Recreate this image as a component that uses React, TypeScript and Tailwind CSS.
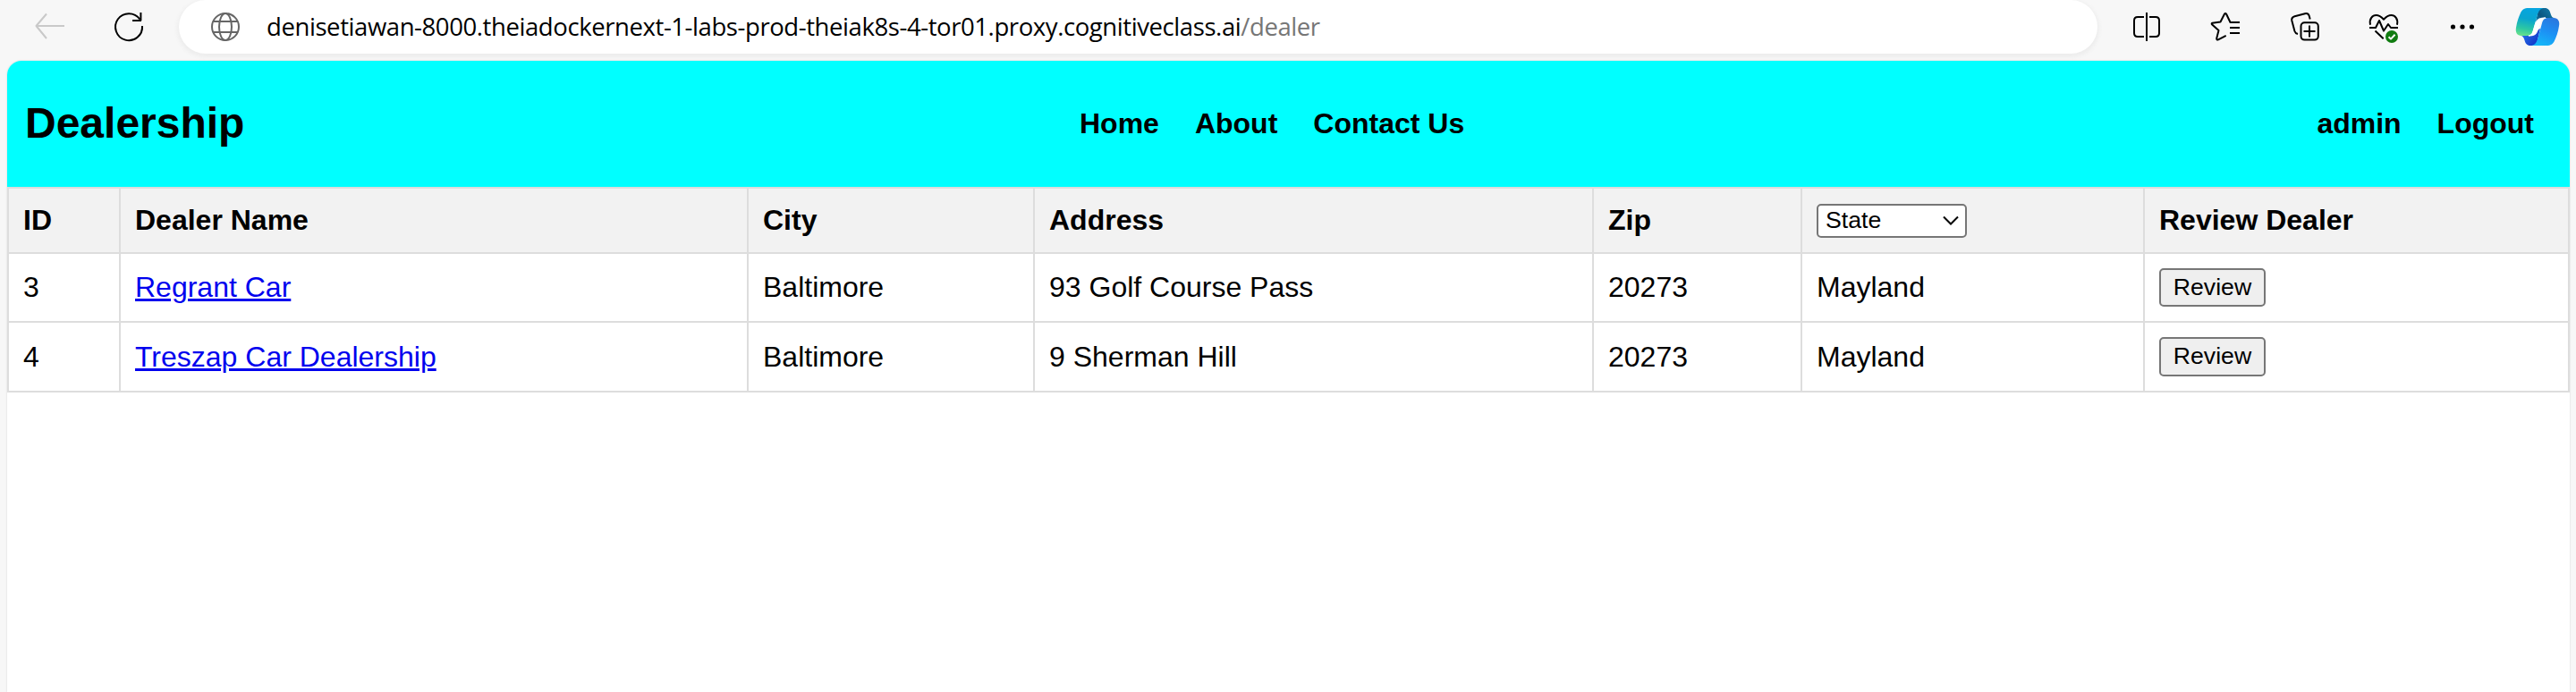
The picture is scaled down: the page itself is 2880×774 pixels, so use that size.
import type { ReactNode } from "react";

function Icon({ children, className = "text-black", stroke = 2 }: { children: ReactNode; className?: string; stroke?: number }) {
  return (
    <svg
      viewBox="-20 -20 40 40"
      className={`h-10 w-10 shrink-0 ${className}`}
      fill="none"
      stroke="currentColor"
      strokeWidth={stroke}
      strokeLinejoin="round"
    >
      {children}
    </svg>
  );
}

function CopilotLogo() {
  return (
    <svg viewBox="-25 -22 50 44" className="ml-[39px] h-11 w-[50px] shrink-0">
      <defs>
        <linearGradient id="cpLeft" x1="0.5" y1="0" x2="0.3" y2="1">
          <stop offset="0" stopColor="#06a5e0" />
          <stop offset="0.4" stopColor="#0aa5cf" />
          <stop offset="0.75" stopColor="#2cc7a4" />
          <stop offset="1" stopColor="#66e08c" />
        </linearGradient>
        <linearGradient id="cpRight" x1="0.8" y1="0" x2="0.4" y2="1">
          <stop offset="0" stopColor="#2a76dd" />
          <stop offset="0.5" stopColor="#1c90f4" />
          <stop offset="1" stopColor="#15b6f8" />
        </linearGradient>
        <linearGradient id="cpTop" x1="0" y1="1" x2="1" y2="0.3">
          <stop offset="0" stopColor="#0a9ad0" />
          <stop offset="0.45" stopColor="#0b5580" />
          <stop offset="1" stopColor="#1279a8" />
        </linearGradient>
        <linearGradient id="cpBottom" x1="0" y1="0" x2="1" y2="0.6">
          <stop offset="0" stopColor="#2b7cf0" />
          <stop offset="1" stopColor="#1236c8" />
        </linearGradient>
      </defs>
      <path d="M4-21H8C12-21 13.500-18.500 14.500-15C15.300-12 16.500-10 19-10H8C4-10 2-7 1-4L-3-2L0-15C1-19 2-21 4-21z" fill="url(#cpTop)" />
      <path d="M-4 21H-8C-12 21-13.500 18.500-14.500 15C-15.300 12-16.500 10-19 10H-8C-4 10-2 7-1 4L3 2L0 15C-1 19-2 21-4 21z" fill="url(#cpBottom)" />
      <path d="M-10-21H8C4-21 1.500-18.500 0-14L-5 4C-6 8-8 10-12 10H-18C-23 10-25 6-24 1C-23-6-21-11-19-15.500C-17-19.500-15-21-10-21z" fill="url(#cpLeft)" />
      <path d="M10 21H-8C-4 21-1.500 18.500 0 14L5-4C6-8 8-10 12-10H18C23-10 25-6 24-1C23 6 21 11 19 15.500C17 19.500 15 21 10 21z" fill="url(#cpRight)" />
      <path d="M9-10C3-10 0-9-2-5L-5 5C-6 8.500-8 10-10 10C-3.500 10-1.500 8.500 0 4L4-7C5-9.500 7-10 9-10z" fill="#fff" stroke="#fff" strokeWidth="1" />
    </svg>
  );
}

function BrowserBar() {
  return (
    <div className="flex h-[68px] shrink-0 items-start overflow-hidden pl-9">
      <div className="flex h-[60px] items-center gap-12">
        <Icon className="text-[#c9c9c9]">
          <path d="M16-1H-15M-4-14.500L-15.500-1L-4 13" />
        </Icon>
        <Icon>
          <path d="M15-1A15 15 0 1 1 12.300-8.500M13.400-16V-7M14-7H4" />
        </Icon>
      </div>
      <div className="ml-9 flex h-[60px] w-[2145px] shrink-0 items-center rounded-full bg-white pl-8 shadow-[0_2px_4px_2px_#ededed]">
        <Icon className="text-[#666]">
          <circle r="15" />
          <ellipse rx="7" ry="15" />
          <path d="M-14-6H14M-14 6H14" />
        </Icon>
        <div className="ml-[26px] whitespace-pre font-['Open_Sans','Noto_Sans',sans-serif] text-[27.500px] leading-[60px] tracking-[-0.415px] text-black">
          denisetiawan-8000.theiadockernext-1-labs-prod-theiak8s-4-tor01.proxy.cognitiveclass.ai<span className="text-[#767676]">/dealer</span>
        </div>
      </div>
      <div className="ml-[35px] flex h-[60px] items-center">
        <div className="flex gap-[48.250px]">
          <Icon>
            <path d="M0-16V16M-3-11H-10Q-14-11-14-7V7Q-14 11-10 11H-3M3-11H10Q14-11 14-7V7Q14 11 10 11H3" />
          </Icon>
          <Icon>
            <path d="M16-5H5.500L1.200-14Q0-16-1.200-14L-5.500-5.500L-14.500-4.300Q-16-3.800-14.800-2.500L-7.500 4L-9.800 13Q-9.800 15-8 14.300L.7 9.800M5 1H16M5 7H16" />
          </Icon>
          <Icon>
            <rect x="-4.500" y="-4.700" width="19.300" height="19.300" rx="4" />
            <path d="M5-1.500V11.500M-1.500 5H11.500M5.700-8.500L4.600-12.500Q3.600-15.500 0-14.800L-11.500-11.800Q-15.500-10.500-14.700-7L-11.500 5Q-10.800 7.300-8 8" />
          </Icon>
          <Icon>
            <path d="M-15-2.300C-16.500-9-12.500-13-8.500-13C-4.500-13-2.500-11-0-8.300C2.500-11 4.500-13 8.500-13C12.500-13 16.500-9 15-2.300M-16 1H-9L-5-7L0 4.500L5-3L8 1H16M-9.500 4.500L-.3 13.300" />
            <circle cx="9" cy="11" r="7" fill="#107c10" stroke="none" />
            <path d="M5.600 11.300L8 13.600L12.600 8.700" stroke="#fff" />
          </Icon>
          <Icon>
            <g fill="currentColor" stroke="none">
              <circle cx="-10.500" r="2.600" />
              <circle r="2.600" />
              <circle cx="10.500" r="2.600" />
            </g>
          </Icon>
        </div>
        <CopilotLogo />
      </div>
    </div>
  );
}

function SiteHeader() {
  return (
    <header className="flex h-[141px] items-center bg-[#00ffff] pb-0.5 font-bold text-black">
      <div className="w-[1199px] pl-5 text-[48px] leading-[56px]">Dealership</div>
      <nav className="flex gap-10 text-[32px] leading-9">
        <a>Home</a>
        <a>About</a>
        <a>Contact Us</a>
      </nav>
      <div className="ml-auto flex gap-10 pr-10 text-[32px] leading-9">
        <a>admin</a>
        <a>Logout</a>
      </div>
    </header>
  );
}

const dealers = [
  { id: 3, name: "Regrant Car", city: "Baltimore", address: "93 Golf Course Pass", zip: "20273", state: "Mayland", height: "h-[77px]", pad: "pb-0.5", button: "h-[43px]" },
  { id: 4, name: "Treszap Car Dealership", city: "Baltimore", address: "9 Sherman Hill", zip: "20273", state: "Mayland", height: "h-[78px]", pad: "pb-0", button: "h-11" },
];

const cell = "border-r-2 border-b-2 border-[#dddddd] px-4 pt-0 text-left align-middle whitespace-nowrap";

function DealerTable() {
  return (
    <table className="w-full table-fixed border-separate border-spacing-0 border-t-2 border-l-2 border-[#dddddd] text-[32px] leading-9 text-black">
      <colgroup>
        <col className="w-[125px]" />
        <col className="w-[702px]" />
        <col className="w-[320px]" />
        <col className="w-[625px]" />
        <col className="w-[233px]" />
        <col className="w-[383px]" />
        <col className="w-[475px]" />
      </colgroup>
      <thead>
        <tr className="h-[73px] bg-[#f2f2f2]">
          <th className={`${cell} pb-0.5`}>ID</th>
          <th className={`${cell} pb-0.5`}>Dealer Name</th>
          <th className={`${cell} pb-0.5`}>City</th>
          <th className={`${cell} pb-0.5`}>Address</th>
          <th className={`${cell} pb-0.5`}>Zip</th>
          <th className={`${cell} pb-0`}>
            <div className="flex h-[38px] w-[168px] items-center justify-between rounded-[5px] border-2 border-[#767676] bg-white pr-[7px] pl-2 text-[26.670px] leading-[34px] font-normal">
              <span className="pb-0.5">State</span>
              <svg viewBox="0 0 18 12" className="h-3 w-[18px]" fill="none" stroke="currentColor" strokeWidth="2">
                <path d="M1 1.500L9 9.500L17 1.500" />
              </svg>
            </div>
          </th>
          <th className={`${cell} pb-0.5`}>Review Dealer</th>
        </tr>
      </thead>
      <tbody>
        {dealers.map((d) => (
          <tr key={d.id} className={d.height}>
            <td className={`${cell} ${d.pad}`}>{d.id}</td>
            <td className={`${cell} ${d.pad}`}>
              <a className="text-[#0000ee] underline">{d.name}</a>
            </td>
            <td className={`${cell} ${d.pad}`}>{d.city}</td>
            <td className={`${cell} ${d.pad}`}>{d.address}</td>
            <td className={`${cell} ${d.pad}`}>{d.zip}</td>
            <td className={`${cell} ${d.pad}`}>{d.state}</td>
            <td className={`${cell} pb-0`}>
              <button className={`${d.button} block w-[119px] rounded-[5px] border-2 border-[#767676] bg-[#efefef] pb-0.5 text-center text-[26.670px] leading-[30px]`}>
                Review
              </button>
            </td>
          </tr>
        ))}
      </tbody>
    </table>
  );
}

export default function App() {
  return (
    <div className="flex h-[774px] w-[2880px] flex-col overflow-hidden bg-[#f7f7f7] font-['Liberation_Sans',Arial,sans-serif]">
      <BrowserBar />
      <main className="mr-[7px] ml-2 flex-1 overflow-hidden rounded-t-[16px] bg-white shadow-[0_0_2px_#cccccc]">
        <SiteHeader />
        <DealerTable />
      </main>
    </div>
  );
}
